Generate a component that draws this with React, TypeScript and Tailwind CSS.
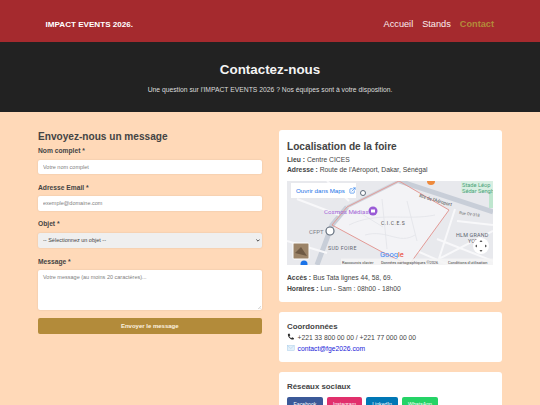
import { LuExternalLink } from "react-icons/lu";

const socials = [
  { name: "Facebook", color: "bg-[#3b5998]", width: "w-[36px]" },
  { name: "Instagram", color: "bg-[#e1306c]", width: "w-[35px]" },
  { name: "LinkedIn", color: "bg-[#0077b5]", width: "w-[32px]" },
  { name: "WhatsApp", color: "bg-[#25d366]", width: "w-[36px]" },
];

const fieldClass =
  "block w-full h-[14.5px] rounded-[2px] bg-white px-[5px] text-[5.5px] text-[#555] shadow-[0_0_2px_rgba(0,0,0,0.12)] placeholder:text-[#808080]";
const labelClass = "mb-[4.5px] mt-[8.5px] block text-[6.7px] font-bold leading-[9px] text-[#444]";

const MapView = () => (
  <div className="relative mb-[6.5px] h-[84px] w-full overflow-hidden bg-[#e8e9ed]">
    <svg viewBox="0 0 206 84" className="h-full w-full font-['Roboto',sans-serif]">
      <rect x="174" y="0" width="32" height="11" fill="#d8efe2" />
      <rect x="202" y="11" width="4" height="16" fill="#bfe6cf" />
      <path d="M60 26 L112 0 L162 29 L122 84 L95 71 L45 44 Z" fill="#f3f3f6" />
      <path d="M112 0 L206 31" stroke="#c8ced8" strokeWidth="5" fill="none" />
      <path d="M60 26 L45 44 L30 84" stroke="#c8ced8" strokeWidth="5" fill="none" />
      <path d="M60 26 L112 0" stroke="#ced3dc" strokeWidth="3" fill="none" />
      <path d="M0 60 L40 72 M140 84 L206 50 M150 58 L206 80 M10 18 L52 34 M40 0 L62 20 M170 40 L206 44 M130 70 L162 84 M168 28 L150 84" stroke="#f8f8fa" strokeWidth="2" fill="none" />
      <path d="M62 44 C90 30 120 40 148 34 M78 54 C100 48 112 64 128 54 M95 18 L100 68 M70 30 L96 46 M120 20 L130 60" stroke="#e2e3e9" strokeWidth="0.8" fill="none" />
      <path d="M60 26 L112 0 L162 29 L122 84 L95 71 L45 44 Z" stroke="#e39a96" strokeWidth="1" fill="none" />
      <text x="175" y="6" fontSize="5.7" fill="#4ba37a">Stade Léop</text>
      <text x="175" y="12" fontSize="5.7" fill="#4ba37a">Sédar Sengh</text>
      <circle cx="144" cy="0" r="4" fill="#ee8a3c" />
      <text x="37" y="33" fontSize="6.2" fill="#a569d8">Cosmos Médias</text>
      <circle cx="86" cy="30" r="4.5" fill="#9a5bd6" />
      <rect x="84" y="28.5" width="4" height="3" fill="#fff" />
      <text x="94" y="44" fontSize="5" fill="#555" letterSpacing="0.6">C.I.C.E.S</text>
      <text x="22" y="53" fontSize="6" fill="#7b8088">CFPT</text>
      <circle cx="43" cy="50" r="4" fill="#fff" stroke="#5f6b7a" strokeWidth="1.2" />
      <circle cx="76" cy="12" r="2.5" fill="#fff" stroke="#5f6b7a" strokeWidth="1" />
      <text x="41" y="69" fontSize="5.2" fill="#5e6570" letterSpacing="0.4">SUD FOIRE</text>
      <text x="169" y="56" fontSize="5.4" fill="#5e6570" letterSpacing="0.2">HLM GRAND</text>
      <text x="181" y="62" fontSize="5.4" fill="#5e6570">YOFF</text>
      <text x="132" y="16" fontSize="4.6" fill="#444" transform="rotate(16 132 16)">Rte de l'Aéroport</text>
      <text x="172" y="33" fontSize="4" fill="#666" transform="rotate(8 172 33)">Rue OY-318</text>
      <text x="93" y="76" fontSize="7.5" fill="#4285f4">
        Goog<tspan fill="#ea4335">le</tspan>
      </text>
      <rect x="54" y="77.5" width="152" height="6.5" fill="#f5f5f5" fillOpacity="0.85" />
      <text x="55" y="82.5" fontSize="3.9" fill="#444">Raccourcis clavier</text>
      <text x="94" y="82.5" fontSize="3.9" fill="#444">Données cartographiques ©2026</text>
      <text x="161" y="82.5" fontSize="3.9" fill="#444">Conditions d'utilisation</text>
      <rect x="6" y="62" width="16" height="16" rx="1" fill="#9c8468" stroke="#fff" strokeWidth="1" />
      <path d="M8 72 L14 66 L20 75 Z" fill="#6f5a44" />
      <circle cx="17" cy="83" r="3.5" fill="#1a73e8" />
      <circle cx="194" cy="65" r="8" fill="#fff" />
      <path d="M194 59 L192.5 61 H195.5 Z M194 71 L192.5 69 H195.5 Z M188 65 L190 63.5 V66.5 Z M200 65 L198 63.5 V66.5 Z" fill="#555" />
    </svg>
    <div className="absolute left-[4px] top-[2px] flex h-[15px] w-[65px] items-center gap-[4px] bg-white pl-[5px] text-[6.2px] font-medium text-[#1a73e8]">
      Ouvrir dans Maps
      <LuExternalLink className="text-[7px]" />
    </div>
  </div>
);

export default function App() {
  return (
    <div className="h-[405px] w-[540px] overflow-hidden bg-[#ffd9b8] font-['Liberation_Sans',Arial,sans-serif] text-[#444]">
      <header className="flex h-[42px] items-center justify-between bg-[#a52a2e] pl-[45.5px] pr-[46px] pt-[8px] text-white">
        <span className="text-[8.1px] font-bold">IMPACT EVENTS 2026.</span>
        <nav className="flex gap-[9px] text-[9.2px]">
          <a className="text-[#fbeeee]">Accueil</a>
          <a className="text-[#fbeeee]">Stands</a>
          <a className="font-bold text-[#b38b3a]">Contact</a>
        </nav>
      </header>

      <section className="flex h-[70px] flex-col items-center bg-[#222] pt-[20px] text-white">
        <h1 className="text-[13.4px] font-bold leading-[16px] text-[#f4f4f4]">Contactez-nous</h1>
        <p className="mt-[8px] text-[6.77px] leading-[8px] text-[#dcdcdc]">
          Une question sur l'IMPACT EVENTS 2026 ? Nos équipes sont à votre disposition.
        </p>
      </section>

      <main className="flex gap-[17px] pl-[38px] pt-[18px]">
        <form className="w-[223.5px] shrink-0">
          <h2 className="text-[10.1px] font-bold leading-[14px]">Envoyez-nous un message</h2>
          <label className="mb-[4.5px] mt-[2px] block text-[6.7px] font-bold leading-[9px] text-[#444]">Nom complet *</label>
          <input className={fieldClass} placeholder="Votre nom complet" />
          <label className={labelClass}>Adresse Email *</label>
          <input className={fieldClass} placeholder="exemple@domaine.com" />
          <label className={labelClass}>Objet *</label>
          <div className="relative">
            <select className="block h-[15.5px] w-full appearance-none rounded-[2px] bg-[#efefef] px-[5px] text-[5.5px] text-[#444] shadow-[0_0_2px_rgba(0,0,0,0.12)]">
              <option>-- Sélectionnez un objet --</option>
            </select>
            <svg viewBox="0 0 6 4" className="absolute right-[2px] top-[6px] h-[3px] w-[4px]">
              <path d="M0.5 0.5 L3 3 L5.5 0.5" fill="none" stroke="#222" strokeWidth="1.2" />
            </svg>
          </div>
          <label className="mb-[4px] mt-[8.5px] block text-[6.7px] font-bold leading-[9px] text-[#444]">Message *</label>
          <div className="relative">
            <textarea
              className="block h-[40.5px] w-full resize-none rounded-[2px] bg-white px-[5px] py-[3px] text-[5.5px] shadow-[0_0_2px_rgba(0,0,0,0.12)] placeholder:text-[#808080]"
              placeholder="Votre message (au moins 20 caractères)..."
            />
            <svg viewBox="0 0 4 4" className="absolute bottom-[1px] right-[1px] h-[3px] w-[3px]">
              <path d="M0 4 L4 0 M2 4 L4 2" stroke="#999" strokeWidth="0.5" />
            </svg>
          </div>
          <button
            type="button"
            className="mt-[8px] h-[16px] w-full rounded-[2px] bg-[#b38b3a] text-[6px] font-bold text-[#fdf3e0]"
          >
            Envoyer le message
          </button>
        </form>

        <aside className="flex w-[223px] shrink-0 flex-col gap-[9.5px]">
          <div className="rounded-[3px] bg-white px-[8.5px] pb-[8.5px] pt-[9.5px]">
            <h3 className="mb-[2px] text-[10.15px] font-bold leading-[13px]">Localisation de la foire</h3>
            <p className="text-[6.75px] leading-[10.5px]"><b>Lieu :</b> Centre CICES</p>
            <p className="mb-[5.5px] text-[6.75px] leading-[10.5px]"><b>Adresse :</b> Route de l'Aéroport, Dakar, Sénégal</p>
            <MapView />
            <p className="text-[6.75px] leading-[11px]"><b>Accès :</b> Bus Tata lignes 44, 58, 69.</p>
            <p className="text-[6.75px] leading-[11px]"><b>Horaires :</b> Lun - Sam : 08h00 - 18h00</p>
          </div>

          <div className="rounded-[3px] bg-white px-[8.5px] pb-[8.5px] pt-[9px]">
            <h3 className="text-[7.85px] font-bold leading-[11px]">Coordonnées</h3>
            <p className="flex items-center gap-[3px] text-[6.75px] leading-[11px]">
              <svg viewBox="0 0 16 16" className="h-[7.5px] w-[7.5px]">
                <path d="M2 2 L5 1 L7 5 L5 7 C6 9 7 10 9 11 L11 9 L15 11 L14 14 C8 15 1 8 2 2 Z" fill="#2b2b2b" />
              </svg>
              +221 33 800 00 00 / +221 77 000 00 00
            </p>
            <p className="flex items-center gap-[3px] text-[6.75px] leading-[11px]">
              <svg viewBox="0 0 16 12" className="h-[6px] w-[7.5px]">
                <rect x="0.5" y="0.5" width="15" height="11" fill="#e3f0fa" stroke="#a8cdea" />
                <path d="M1 1 L8 7 L15 1" fill="none" stroke="#a8cdea" />
              </svg>
              <a className="text-[#1a1ad8]">contact@fge2026.com</a>
            </p>
          </div>

          <div className="rounded-[3px] bg-white px-[8.5px] pb-[6px] pt-[9px]">
            <h3 className="mb-[5.5px] text-[7.85px] font-bold leading-[11px]">Réseaux sociaux</h3>
            <div className="flex gap-[4px]">
              {socials.map((s) => (
                <a
                  key={s.name}
                  className={`${s.color} ${s.width} rounded-[2px] py-[4px] text-center text-[5.2px] font-medium leading-[7px] text-white`}
                >
                  {s.name}
                </a>
              ))}
            </div>
          </div>
        </aside>
      </main>
    </div>
  );
}
